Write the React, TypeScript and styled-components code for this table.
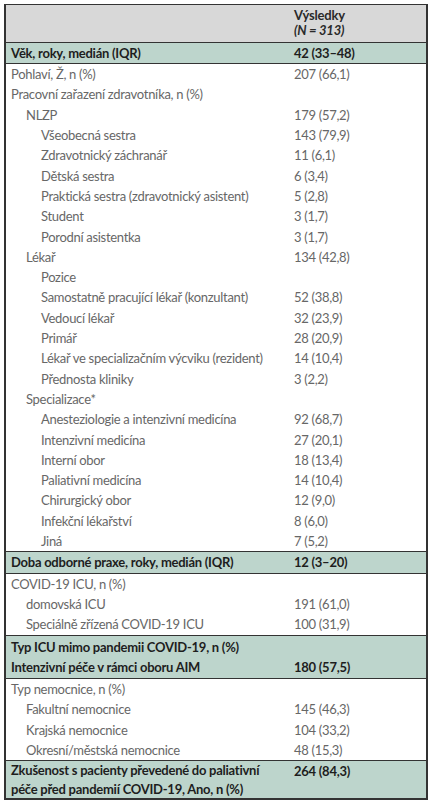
import React from "react";
import styled, { createGlobalStyle } from "styled-components";

const GlobalStyle = createGlobalStyle`
  html, body {
    margin: 0;
    padding: 0;
    background: #ffffff;
  }
  body {
    font-family: Lato, "Liberation Sans", sans-serif;
  }
`;

const Page = styled.div`
  padding: 4px 5px 0 4px;
  width: 424px;
`;

const Table = styled.div`
  border: 2px solid #333;
  border-top-width: 1.5px;
  background: #fff;
`;

type Tone = "plain" | "accent" | "head";

const Section = styled.div<{ tone: Tone; spaced?: boolean }>`
  background: ${({ tone }) =>
    tone === "accent" ? "#bdd5cc" : tone === "head" ? "#d8d8d8" : "#ffffff"};
  border-top: ${({ tone }) => (tone === "head" ? "none" : "1px solid #333")};
  padding: ${({ tone, spaced }) =>
    tone === "head" ? "3px 0 4px" : spaced ? "1px 0" : "0"};
`;

const Row = styled.div<{ bold?: boolean }>`
  display: grid;
  grid-template-columns: 1fr 132px;
  min-height: 20.3px;
  align-items: center;
  font-size: 13px;
  line-height: 18.5px;
  letter-spacing: ${({ bold }) => (bold ? "-0.25px" : "-0.3px")};
  color: ${({ bold }) => (bold ? "#1e1e1e" : "#676767")};
  font-weight: ${({ bold }) => (bold ? 700 : 400)};
`;

const Label = styled.div<{ level: number }>`
  padding-left: ${({ level }) => 5 + level * 15}px;
  padding-right: 6px;
`;

const Value = styled.div`
  align-self: start;
  padding-top: 0.9px;
`;

const HeadCell = styled.div`
  grid-column: 2;
  font-size: 13px;
  line-height: 15px;
  font-weight: 700;
  letter-spacing: -0.2px;
  color: #2a2a2a;
`;

const HeadNote = styled.span`
  font-style: italic;
`;

const Footer = styled.div`
  height: 6px;
  background: #eeeeee;
`;

type Item = { label: string; value?: string; level?: number };
type Block = { tone: "plain" | "accent"; spaced?: boolean; rows: Item[] };

const blocks: Block[] = [
  { tone: "accent", rows: [{ label: "Věk, roky, medián (IQR)", value: "42 (33–48)" }] },
  {
    tone: "plain",
    rows: [
      { label: "Pohlaví, Ž, n (%)", value: "207 (66,1)" },
      { label: "Pracovní zařazení zdravotníka, n (%)" },
      { label: "NLZP", value: "179 (57,2)", level: 1 },
      { label: "Všeobecná sestra", value: "143 (79,9)", level: 2 },
      { label: "Zdravotnický záchranář", value: "11 (6,1)", level: 2 },
      { label: "Dětská sestra", value: "6 (3,4)", level: 2 },
      { label: "Praktická sestra (zdravotnický asistent)", value: "5 (2,8)", level: 2 },
      { label: "Student", value: "3 (1,7)", level: 2 },
      { label: "Porodní asistentka", value: "3 (1,7)", level: 2 },
      { label: "Lékař", value: "134 (42,8)", level: 1 },
      { label: "Pozice", level: 2 },
      { label: "Samostatně pracující lékař (konzultant)", value: "52 (38,8)", level: 2 },
      { label: "Vedoucí lékař", value: "32 (23,9)", level: 2 },
      { label: "Primář", value: "28 (20,9)", level: 2 },
      { label: "Lékař ve specializačním výcviku (rezident)", value: "14 (10,4)", level: 2 },
      { label: "Přednosta kliniky", value: "3 (2,2)", level: 2 },
      { label: "Specializace*", level: 1 },
      { label: "Anesteziologie a intenzivní medicína", value: "92 (68,7)", level: 2 },
      { label: "Intenzivní medicína", value: "27 (20,1)", level: 2 },
      { label: "Interní obor", value: "18 (13,4)", level: 2 },
      { label: "Paliativní medicína", value: "14 (10,4)", level: 2 },
      { label: "Chirurgický obor", value: "12 (9,0)", level: 2 },
      { label: "Infekční lékařství", value: "8 (6,0)", level: 2 },
      { label: "Jiná", value: "7 (5,2)", level: 2 },
    ],
  },
  { tone: "accent", rows: [{ label: "Doba odborné praxe, roky, medián (IQR)", value: "12 (3–20)" }] },
  {
    tone: "plain",
    rows: [
      { label: "COVID-19 ICU, n (%)" },
      { label: "domovská ICU", value: "191 (61,0)", level: 1 },
      { label: "Speciálně zřízená COVID-19 ICU", value: "100 (31,9)", level: 1 },
    ],
  },
  {
    tone: "accent",
    spaced: true,
    rows: [
      { label: "Typ ICU mimo pandemii COVID-19, n (%)" },
      { label: "Intenzivní péče v rámci oboru AIM", value: "180 (57,5)" },
    ],
  },
  {
    tone: "plain",
    rows: [
      { label: "Typ nemocnice, n (%)" },
      { label: "Fakultní nemocnice", value: "145 (46,3)", level: 1 },
      { label: "Krajská nemocnice", value: "104 (33,2)", level: 1 },
      { label: "Okresní/městská nemocnice", value: "48 (15,3)", level: 1 },
    ],
  },
  {
    tone: "accent",
    rows: [
      {
        label: "Zkušenost s pacienty převedené do paliativní péče před pandemií COVID-19, Ano, n (%)",
        value: "264 (84,3)",
      },
    ],
  },
];

export default function App() {
  return (
    <Page>
      <GlobalStyle />
      <Table>
        <Section tone="head">
          <Row>
            <div />
            <HeadCell>
              Výsledky
              <br />
              <HeadNote>(N = 313)</HeadNote>
            </HeadCell>
          </Row>
        </Section>
        {blocks.map((block, i) => (
          <Section key={i} tone={block.tone} spaced={block.spaced}>
            {block.rows.map((row, j) => (
              <Row key={j} bold={block.tone === "accent"}>
                <Label level={row.level ?? 0}>{row.label}</Label>
                <Value>{row.value}</Value>
              </Row>
            ))}
          </Section>
        ))}
      </Table>
      <Footer />
    </Page>
  );
}
